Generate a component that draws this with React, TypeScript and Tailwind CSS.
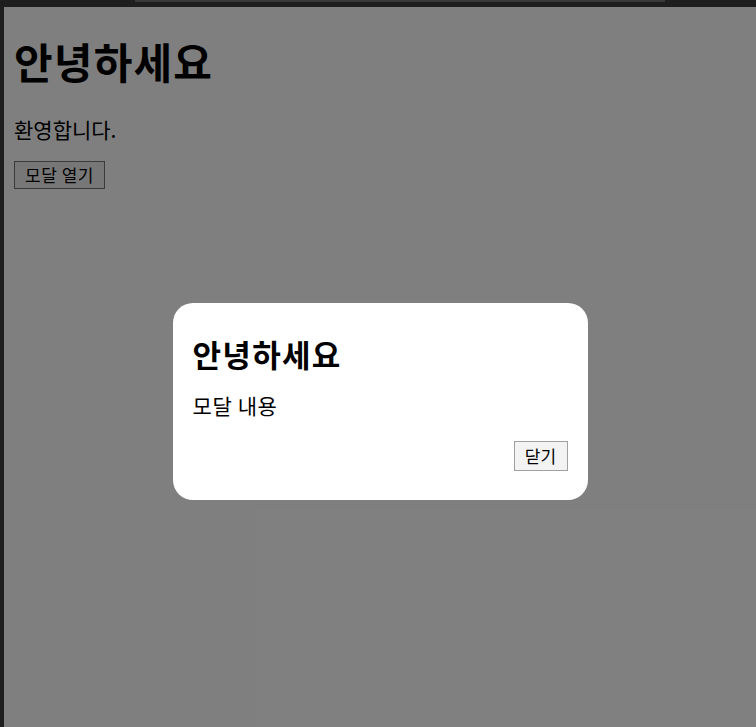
export default function App() {
  return (
    <div
      className="flex h-[727px] w-[756px] flex-col overflow-hidden bg-[#1e1e1e]"
      style={{ fontFamily: '"Noto Sans CJK KR", "Noto Sans", sans-serif' }}
    >
      {/* top chrome strip */}
      <div className="flex h-[7px] shrink-0 bg-[#1e1e1e]">
        <div className="ml-[135px] h-[2px] w-[530px] bg-[#3a3a3a]" />
      </div>

      <div className="flex flex-1">
        <div className="w-[4px] shrink-0 bg-[#1e1e1e]" />

        <div className="relative flex-1 bg-white text-black">
          <div className="px-[10px] pt-[26px]">
            <h1 className="text-[42px] font-bold leading-[56px] tracking-[1.2px]">안녕하세요</h1>
            <p className="mt-[26px] text-[21px] leading-[28px]">환영합니다.</p>
            <button className="mt-[18px] h-[28px] w-[91px] border border-[#767676] bg-[#efefef] text-[17px] leading-[24px] tracking-[0.5px]">
              모달 열기
            </button>
          </div>

          {/* overlay */}
          <div className="absolute inset-0 flex justify-center bg-black/50 pt-[296px]">
            <div className="flex h-[197px] w-[415px] flex-col rounded-[20px] bg-white px-[20px] pt-[30px]">
              <h2 className="text-[31px] font-bold leading-[42px] tracking-[1.3px]">안녕하세요</h2>
              <p className="mt-[16px] text-[21px] leading-[28px] tracking-[0.6px]">모달 내용</p>
              <div className="mt-[22px] flex justify-end">
                <button className="h-[30px] w-[54px] border border-[#a0a0a0] bg-[#f3f3f3] text-[17px] leading-[26px]">
                  닫기
                </button>
              </div>
            </div>
          </div>
        </div>
      </div>
    </div>
  );
}
